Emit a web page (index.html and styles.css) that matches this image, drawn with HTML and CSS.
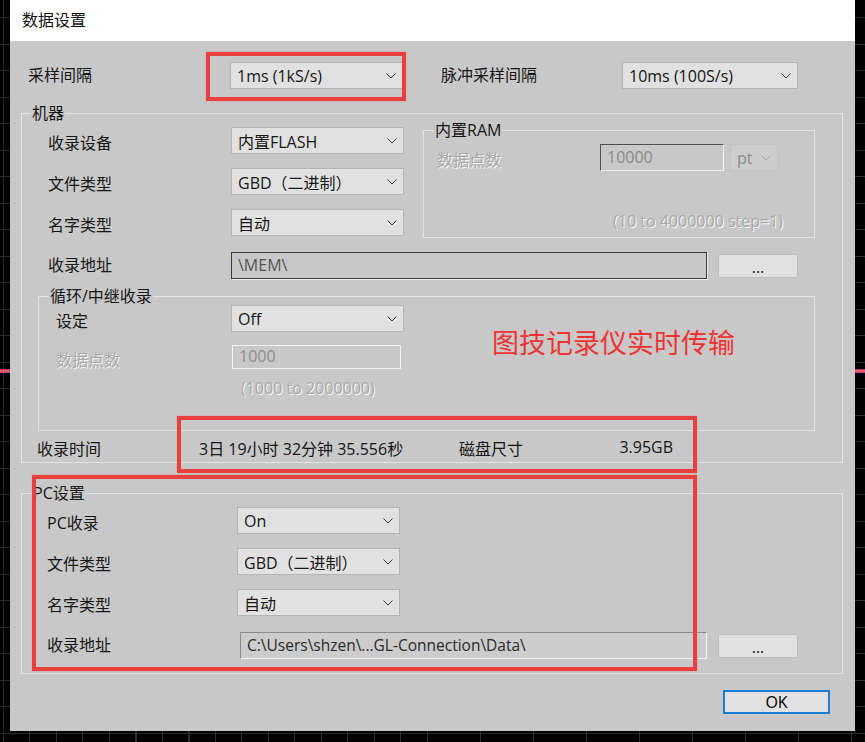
FILE: index.html
```html
<!DOCTYPE html>
<html lang="zh-CN">

<head>
    <meta charset="UTF-8">
    <meta name="viewport" content="width=device-width, initial-scale=1.0">
    <title>数据设置</title>
    <link rel="stylesheet" href="styles.css">
</head>

<body>
    <div class="dialog">
        <div class="titlebar">数据设置</div>

        <div class="dialog-body">
            <div class="top-row">
                <span class="top-label">采样间隔</span>
                <div class="select sel-rate"><span>1ms (1kS/s)</span><svg class="chev" viewBox="0 0 10 6"><polyline points="0.5,0.5 5,5 9.5,0.5"/></svg></div>
                <span class="top-label2">脉冲采样间隔</span>
                <div class="select sel-pulse"><span>10ms (100S/s)</span><svg class="chev" viewBox="0 0 10 6"><polyline points="0.5,0.5 5,5 9.5,0.5"/></svg></div>
            </div>

            <div class="group machine">
                <div class="group-title">机器</div>

                <div class="machine-top">
                    <div class="form-col">
                        <div class="form-row">
                            <span class="label">收录设备</span>
                            <div class="select"><span>内置FLASH</span><svg class="chev" viewBox="0 0 10 6"><polyline points="0.5,0.5 5,5 9.5,0.5"/></svg></div>
                        </div>
                        <div class="form-row">
                            <span class="label">文件类型</span>
                            <div class="select"><span>GBD（二进制）</span><svg class="chev" viewBox="0 0 10 6"><polyline points="0.5,0.5 5,5 9.5,0.5"/></svg></div>
                        </div>
                        <div class="form-row">
                            <span class="label">名字类型</span>
                            <div class="select"><span>自动</span><svg class="chev" viewBox="0 0 10 6"><polyline points="0.5,0.5 5,5 9.5,0.5"/></svg></div>
                        </div>
                    </div>

                    <div class="group ram">
                        <div class="group-title">内置RAM</div>
                        <div class="ram-row">
                            <span class="label disabled">数据点数</span>
                            <div class="input input-sunken">10000</div>
                            <div class="select select-off"><span>pt</span><svg class="chev" viewBox="0 0 10 6"><polyline points="0.5,0.5 5,5 9.5,0.5"/></svg></div>
                        </div>
                        <div class="ram-hint disabled">(10 to 4000000 step=1)</div>
                    </div>
                </div>

                <div class="form-row path-row">
                    <span class="label">收录地址</span>
                    <div class="input input-path">\MEM\</div>
                    <div class="btn-browse">...</div>
                </div>

                <div class="group loop">
                    <div class="group-title">循环/中继收录</div>
                    <div class="loop-body">
                        <div class="loop-fields">
                            <div class="form-row loop-row">
                                <span class="label">设定</span>
                                <div class="select"><span>Off</span><svg class="chev" viewBox="0 0 10 6"><polyline points="0.5,0.5 5,5 9.5,0.5"/></svg></div>
                            </div>
                            <div class="form-row loop-row points-row">
                                <span class="label disabled">数据点数</span>
                                <div class="input input-off">1000</div>
                            </div>
                            <div class="loop-hint disabled">(1000 to 2000000)</div>
                        </div>
                        <div class="annotation">图技记录仪实时传输</div>
                    </div>
                </div>

                <div class="time-row">
                    <span class="time-label">收录时间</span>
                    <span class="time-value">3日 19小时 32分钟 35.556秒</span>
                    <span class="disk">
                        <span>磁盘尺寸</span>
                        <span>3.95GB</span>
                    </span>
                </div>
            </div>

            <div class="group pc">
                <div class="group-title">PC设置</div>
                <div class="pc-rows">
                    <div class="form-row pc-row">
                        <span class="label">PC收录</span>
                        <div class="select"><span>On</span><svg class="chev" viewBox="0 0 10 6"><polyline points="0.5,0.5 5,5 9.5,0.5"/></svg></div>
                    </div>
                    <div class="form-row pc-row">
                        <span class="label">文件类型</span>
                        <div class="select"><span>GBD（二进制）</span><svg class="chev" viewBox="0 0 10 6"><polyline points="0.5,0.5 5,5 9.5,0.5"/></svg></div>
                    </div>
                    <div class="form-row pc-row">
                        <span class="label">名字类型</span>
                        <div class="select"><span>自动</span><svg class="chev" viewBox="0 0 10 6"><polyline points="0.5,0.5 5,5 9.5,0.5"/></svg></div>
                    </div>
                    <div class="form-row pc-row pc-path">
                        <span class="label">收录地址</span>
                        <div class="input input-pc">C:\Users\shzen\...GL-Connection\Data\</div>
                        <div class="btn-browse">...</div>
                    </div>
                </div>
            </div>

            <div class="footer">
                <div class="btn-ok">OK</div>
            </div>
        </div>

        <!-- red annotation frames drawn over the dialog -->
        <div class="mark mark-rate"></div>
        <div class="mark mark-time"></div>
        <div class="mark mark-pc"></div>
    </div>
</body>

</html>
```

FILE: styles.css
```css
body {
    margin: 0;
    width: 865px;
    height: 742px;
    overflow: hidden;
    font-family: "Open Sans", "Noto Sans CJK SC", sans-serif;
    font-size: 16px;
    color: #161616;
    background-color: #000;
    background-image:
        linear-gradient(to bottom, transparent 369px, #a02a8c 369px, #f0705a 371px, #c02a90 373px, transparent 373px),
        repeating-linear-gradient(to right, transparent 0, transparent 3px, #2b2b2b 3px, #2b2b2b 4px, transparent 4px, transparent 26.5px),
        repeating-linear-gradient(to bottom, transparent 0, transparent 17px, #2b2b2b 17px, #2b2b2b 18px, transparent 18px, transparent 26.5px);
}

.dialog {
    position: relative;
    margin-left: 10px;
    width: 845px;
    height: 731px;
    background: #c8c8c8;
}

.titlebar {
    height: 41px;
    line-height: 40px;
    padding-left: 12px;
    background: #fff;
    color: #111;
}

.dialog-body {
    padding: 0 12px 0 11px;
}

/* generic controls */

.select {
    display: flex;
    align-items: center;
    justify-content: space-between;
    box-sizing: border-box;
    width: 173px;
    height: 27px;
    padding: 0 6px 0 6px;
    background: #e1e1e1;
    border: 1px solid #b4b4b4;
    white-space: nowrap;
}

.chev {
    width: 10px;
    height: 6px;
    fill: none;
    stroke: #3a3a3a;
    stroke-width: 1;
}

.input {
    box-sizing: border-box;
    height: 27px;
    line-height: 25px;
    padding-left: 6px;
    white-space: nowrap;
}

.btn-browse {
    box-sizing: border-box;
    width: 80px;
    height: 24px;
    margin-left: 11px;
    line-height: 24px;
    text-align: center;
    background: #e1e1e1;
    border: 1px solid #bdbdbd;
}

.disabled {
    color: #a8a8a8;
    text-shadow: 1px 1px 0 #fafafa;
}

.group {
    box-sizing: border-box;
    border: 1px solid #e2e2e2;
}

.group-title {
    width: fit-content;
    height: 21px;
    line-height: 21px;
    margin: -11px 0 0 9px;
    padding: 0 1px;
    background: #c8c8c8;
}

.form-row {
    display: flex;
    align-items: center;
    height: 27px;
}

.label {
    box-sizing: border-box;
    width: 209px;
    padding: 3px 0 0 26px;
}

/* top row */

.top-row {
    display: flex;
    align-items: center;
    height: 27px;
    margin-top: 21px;
    padding-left: 7px;
}

.top-label {
    width: 202px;
    padding-bottom: 3px;
}

.top-label2 {
    width: 181px;
    margin-left: 38px;
    padding-bottom: 3px;
}

.sel-pulse {
    width: 176px;
}

/* 机器 group */

.machine {
    height: 350px;
    margin-top: 24px;
}

.machine-top {
    display: flex;
    margin-top: 3px;
}

.form-col {
    width: 401px;
}

.form-col .form-row + .form-row {
    margin-top: 14px;
}

.ram {
    width: 392px;
    height: 108px;
    margin-top: 3px;
}

.ram .group-title {
    margin-left: 10px;
}

.ram-row {
    display: flex;
    align-items: center;
    height: 27px;
    margin-top: 3px;
}

.ram-row .label {
    width: 176px;
    padding-left: 13px;
}

.input-sunken {
    width: 124px;
    color: #8a8a8a;
    border: 1px solid;
    border-color: #505050 #f2f2f2 #f2f2f2 #505050;
}

.select-off {
    width: 48px;
    margin-left: 6px;
    padding-right: 6px;
    color: #8c8c8c;
    background: #cdcdcd;
    border-color: #c4c4c4;
}

.select-off .chev {
    stroke: #aaa;
}

.ram-hint {
    margin-top: 40px;
    padding-right: 31px;
    line-height: 20px;
    text-align: right;
}

.path-row {
    margin-top: 14px;
}

.path-row .label {
    padding: 0 0 4px 26px;
}

.input-path {
    width: 476px;
    color: #555;
    border: 1px solid #3a3a3a;
    box-shadow: 1px 1px 0 #efefef;
}

/* 循环/中继收录 group */

.loop {
    width: 777px;
    height: 135px;
    margin: 17px 0 0 16px;
}

.loop .group-title {
    margin-left: 10px;
}

.loop-body {
    display: flex;
    margin-top: -2px;
}

.loop-row .label {
    width: 192px;
    padding-left: 17px;
}

.points-row {
    height: 24px;
    margin-top: 13px;
}

.points-row .label {
    width: 193px;
}

.input-off {
    width: 169px;
    height: 24px;
    line-height: 21px;
    color: #8e8e8e;
    border: 1.5px solid #f0f0f0;
}

.loop-hint {
    margin-top: 9px;
    padding-left: 202px;
    line-height: 20px;
}

.annotation {
    margin: 20px 0 0 88px;
    font-size: 27px;
    line-height: 36px;
    color: #f03434;
}

.time-row {
    display: flex;
    align-items: center;
    height: 24px;
    margin-top: 5px;
}

.time-label {
    width: 162px;
    padding-left: 15px;
}

.time-value {
    width: 260px;
}

.disk {
    display: flex;
    justify-content: space-between;
    width: 214px;
}

/* PC设置 group */

.pc {
    height: 181px;
    margin-top: 30px;
}

.pc .group-title {
    margin-left: 10px;
}

.pc-rows {
    margin-top: 3px;
}

.pc-row .label {
    width: 215px;
    padding-left: 25px;
}

.pc-row .select {
    width: 163px;
}

.pc-row + .pc-row {
    margin-top: 14px;
}

.pc-row.pc-path {
    margin-top: 16px;
}

.pc-path .label {
    width: 218px;
    padding: 0 0 4px 25px;
}

.input-pc {
    width: 467px;
    font-size: 15.5px;
    color: #2a2a2a;
    background: #cccccc;
    border: 1px solid;
    border-color: #8a8a8a #f4f4f4 #f4f4f4 #8a8a8a;
}

.footer {
    display: flex;
    justify-content: flex-end;
    margin-top: 16px;
    padding-right: 13px;
}

.btn-ok {
    box-sizing: border-box;
    width: 107px;
    height: 24px;
    line-height: 20px;
    text-align: center;
    background: #e1e1e1;
    border: 2px solid #1a7fd4;
    color: #000;
}

/* annotation frames */

.mark {
    position: absolute;
    border: 4px solid #e8403f;
    box-shadow: 0 0 1px #f07a7a;
}

.mark-rate {
    left: 196px;
    top: 52px;
    width: 192px;
    height: 41px;
}

.mark-time {
    left: 167px;
    top: 416px;
    width: 512px;
    height: 49px;
}

.mark-pc {
    left: 22px;
    top: 475px;
    width: 657px;
    height: 188px;
}
```
